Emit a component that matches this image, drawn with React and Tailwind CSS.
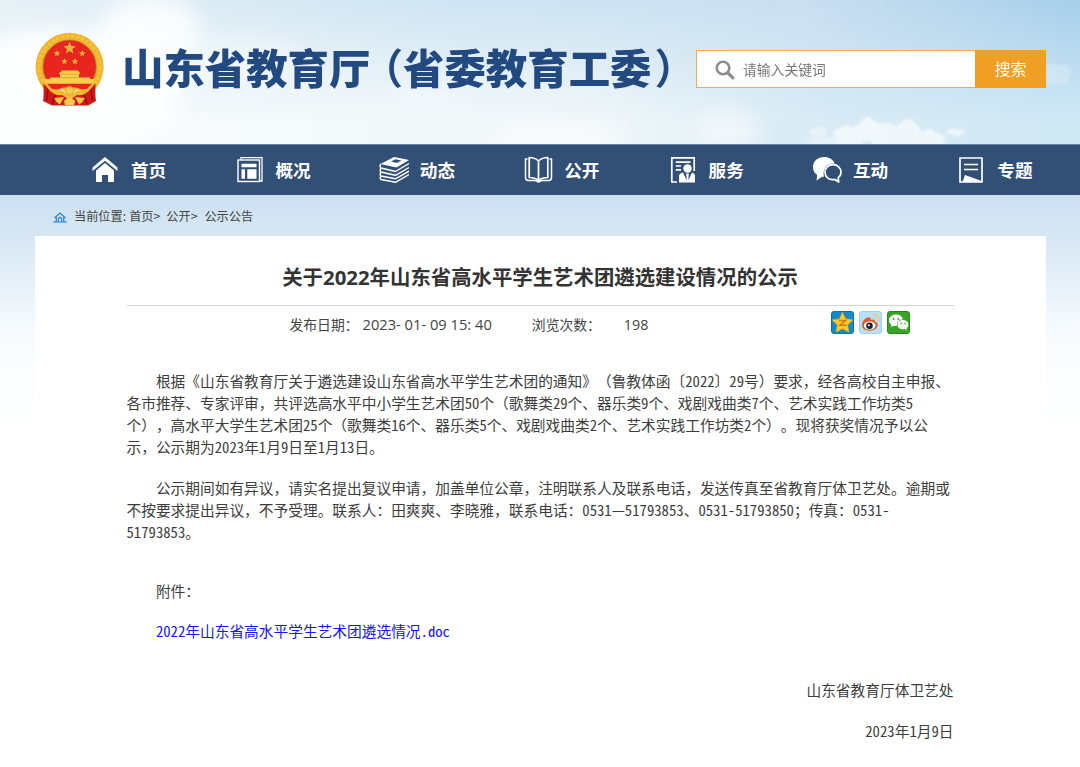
const NAV_ITEMS = [
  { label: '首页', Icon: HomeIcon },
  { label: '概况', Icon: OverviewIcon },
  { label: '动态', Icon: StackIcon },
  { label: '公开', Icon: BookIcon },
  { label: '服务', Icon: ServiceIcon },
  { label: '互动', Icon: ChatIcon },
  { label: '专题', Icon: TopicIcon },
];

const PARAGRAPH_ONE = [
  '根据《山东省教育厅关于遴选建设山东省高水平学生艺术团的通知》（鲁教体函〔2022〕29号）要求，经各高校自主申报、',
  '各市推荐、专家评审，共评选高水平中小学生艺术团50个（歌舞类29个、器乐类9个、戏剧戏曲类7个、艺术实践工作坊类5',
  '个），高水平大学生艺术团25个（歌舞类16个、器乐类5个、戏剧戏曲类2个、艺术实践工作坊类2个）。现将获奖情况予以公',
  '示，公示期为2023年1月9日至1月13日。',
];

const PARAGRAPH_TWO = [
  '公示期间如有异议，请实名提出复议申请，加盖单位公章，注明联系人及联系电话，发送传真至省教育厅体卫艺处。逾期或',
  '不按要求提出异议，不予受理。联系人：田爽爽、李晓雅，联系电话：0531—51793853、0531-51793850；传真：0531-',
  '51793853。',
];

export default function App() {
  return (
    <div className="w-[1080px] h-[767px] overflow-hidden bg-white font-['Noto_Sans_CJK_SC',sans-serif] text-[#333] [text-spacing-trim:space-all]">
      <Header />
      <NavBar />
      <main className="h-[572px] pl-[35px] pr-[34px] bg-[linear-gradient(180deg,#cde0f0_0px,#d8e8f4_45px,#e6f0f9_85px,#f4f9fd_125px,#fbfdfe_175px,#ffffff_240px)]">
        <Breadcrumb />
        <Article />
      </main>
    </div>
  );
}

function Header() {
  return (
    <header className="relative h-36 overflow-hidden bg-[#d9eaf5]">
      <Sky />
      <div className="relative flex items-start pl-[35px]">
        <Emblem />
        <h1 className="ml-[17px] mt-9 flex text-[41.4px] leading-[60px] font-black text-[#234a80] whitespace-nowrap">
          <span>山东省教育厅</span>
          <span className="ml-[12px] font-bold [font-feature-settings:'halt']">（</span>
          <span>省委教育工委</span>
          <span className="ml-[3px] font-bold [font-feature-settings:'halt']">）</span>
        </h1>
        <form className="absolute left-[696px] top-[50px] flex w-[350px] h-[38px] border border-[#f0ae50] bg-white">
          <svg className="ml-[18px] mt-[9px] w-5 h-5" viewBox="0 0 20 20" fill="none" stroke="#8d8d8d">
            <circle cx="8" cy="8" r="6.3" strokeWidth="2.6" />
            <path d="M12.8 12.8 17.8 17.8" strokeWidth="3.2" strokeLinecap="round" />
          </svg>
          <span className="ml-2 flex-1 text-[13.8px] leading-[37px] text-[#777]">请输入关键词</span>
          <button type="button" className="-my-px -mr-px w-[71px] bg-[#f19f25] pb-0.5 text-base text-white">搜索</button>
        </form>
      </div>
    </header>
  );
}

function Sky() {
  return (
    <svg className="absolute inset-0" width="1080" height="144" viewBox="0 0 1080 144" preserveAspectRatio="none">
      <defs>
        <linearGradient id="sky" x1="0" y1="0" x2="1" y2="0">
          <stop offset="0" stopColor="#e6f1f6" />
          <stop offset="0.4" stopColor="#d0e5f3" />
          <stop offset="0.75" stopColor="#c9dff0" />
          <stop offset="1" stopColor="#a8cfeb" />
        </linearGradient>
        <linearGradient id="low" x1="0" y1="0" x2="1" y2="0">
          <stop offset="0" stopColor="#f8fcfc" />
          <stop offset="0.55" stopColor="#f1f7f9" />
          <stop offset="0.75" stopColor="#d9ebf5" />
          <stop offset="1" stopColor="#cfe8f4" />
        </linearGradient>
        <linearGradient id="fade" x1="0" y1="0" x2="0" y2="1">
          <stop offset="0" stopColor="#000" />
          <stop offset="0.85" stopColor="#fff" />
        </linearGradient>
        <mask id="lowMask">
          <rect width="1080" height="144" fill="url(#fade)" />
        </mask>
        <filter id="soft" x="-60%" y="-150%" width="220%" height="400%">
          <feGaussianBlur stdDeviation="11" />
        </filter>
        <filter id="puff" x="-30%" y="-50%" width="160%" height="200%">
          <feTurbulence type="fractalNoise" baseFrequency="0.09" numOctaves="3" seed="4" />
          <feDisplacementMap in="SourceGraphic" scale="9" xChannelSelector="R" yChannelSelector="G" />
          <feGaussianBlur stdDeviation="1.8" />
        </filter>
      </defs>
      <rect width="1080" height="144" fill="url(#sky)" />
      <rect width="1080" height="144" fill="url(#low)" mask="url(#lowMask)" />
      <g fill="#fdfefe" filter="url(#soft)">
        <ellipse cx="60" cy="95" rx="120" ry="65" />
        <ellipse cx="150" cy="30" rx="50" ry="34" opacity="0.9" />
        <ellipse cx="240" cy="60" rx="70" ry="20" opacity="0.4" />
        <ellipse cx="430" cy="102" rx="50" ry="10" opacity="0.4" />
        <ellipse cx="560" cy="138" rx="70" ry="10" opacity="0.7" />
        <ellipse cx="725" cy="132" rx="30" ry="20" opacity="0.6" />
      </g>
      <g fill="#fff" filter="url(#puff)" opacity="0.65">
        <ellipse cx="850" cy="136" rx="18" ry="10" />
        <circle cx="868" cy="130" r="11" />
        <circle cx="886" cy="138" r="15" />
        <circle cx="908" cy="130" r="10" />
        <ellipse cx="920" cy="140" rx="26" ry="9" />
        <ellipse cx="955" cy="132" rx="10" ry="4" />
        <ellipse cx="818" cy="132" rx="9" ry="4" opacity="0.6" />
        <ellipse cx="822" cy="142" rx="18" ry="4" opacity="0.6" />
      </g>
      <ellipse cx="1056" cy="74" rx="16" ry="11" fill="#fff" opacity="0.22" filter="url(#puff)" />
    </svg>
  );
}

function Emblem() {
  const star = 'M0-5 1.3-1.7 4.8-1.5 2 .7 3 4 0 2.1-3 4-2 .7-4.8-1.5-1.3-1.7Z';
  return (
    <svg className="mt-8 shrink-0" width="70" height="75" viewBox="0 0 70 75">
      <circle cx="34.6" cy="34.7" r="34" fill="#f0b530" />
      <circle cx="34.6" cy="34.7" r="30.5" fill="none" stroke="#f4c43f" strokeWidth="3" strokeDasharray="3 2" />
      <circle cx="34.6" cy="34.7" r="26.6" fill="#e9251f" stroke="#b97a1c" strokeWidth="0.8" />
      <g fill="#e9b437">
        <path d={star} transform="translate(34.6 16.3) scale(1.3)" />
        <path d={star} transform="translate(22 21.5) scale(.68)" />
        <path d={star} transform="translate(47.3 21.5) scale(.68)" />
        <path d={star} transform="translate(29.5 29.5) scale(.68)" />
        <path d={star} transform="translate(40 29.5) scale(.68)" />
      </g>
      <path d="M27 38.5H43L45.5 42H44V45.5H55V47H60L57 52H12L9 47H15V45.5H25V42H23.5Z" fill="#f5cf49" />
      <path d="M26 42.3H43.5M25 45.5H45" stroke="#d99b25" strokeWidth=".7" />
      <path d="M12 51.8H57L52 57H17Z" fill="#e9251f" />
      <path d="M8.5 51.5C8.5 60 9 64 8 69L17 73.5H53L61 69C60 63 60.5 58 60.5 51.5L52 60H17Z" fill="#d3181c" />
      <path d="M13 57 11.5 69M20 63 17 72M56 57 57.5 69M49 63 52 72" stroke="#96090e" strokeWidth="1.5" />
      <path d="M10 51 16 57C22 60 25 55 29.5 55.5H39.5C44 55 47 60 53 57L59 51C55 60 49 64 42 63L34.6 68 27 63C20 64 14 60 10 51Z" fill="#f0b935" />
      <path d="M25 58.5C28 57.5 29 59 31 61.5M44 58.5C41 57.5 40 59 38 61.5" fill="none" stroke="#fbe9a0" strokeWidth="1.2" />
      <path d="M19 66 29 65 25 72.5 22 70.5ZM50 66 40 65 44 72.5 47 70.5Z" fill="#f2c544" />
      <path d="M29 69Q34.6 62 40.2 69L39 73H30Z" fill="#f5cd4b" />
      <circle cx="34.6" cy="58.5" r="4" fill="#f5cd4b" stroke="#dfa027" strokeWidth=".8" />
    </svg>
  );
}

function NavBar() {
  return (
    <nav className="flex h-[51px] pl-[90px] bg-[#325075] border-t border-[#6783a6]">
      {NAV_ITEMS.map(({ label, Icon }) => (
        <a key={label} className="flex w-[144.4px] shrink-0 items-center text-white">
          <Icon />
          <span className="ml-[11px] text-[17.6px] font-bold leading-none whitespace-nowrap">{label}</span>
        </a>
      ))}
    </nav>
  );
}

function Breadcrumb() {
  return (
    <div className="flex h-[41px] items-center pt-px pl-[18px] text-[12.2px] text-[#444]">
      <svg className="mt-0.5 mr-[7px]" width="14" height="12" viewBox="0 0 14 12" fill="none" stroke="#2482d8">
        <path d="M1.5 7 7 2 12.5 7M3.2 6V10.5M10.8 6V10.5M0 11H14M5.3 10.5V7.6L7 6.2 8.7 7.6V10.5" strokeWidth="1.2" />
      </svg>
      <span>当前位置:</span>
      <span className="ml-[3px]">首页&gt;</span>
      <span className="ml-1.5">公开&gt;</span>
      <span className="ml-[7px]">公示公告</span>
    </div>
  );
}

function Article() {
  return (
    <article className="h-[531px] bg-white pl-[91.5px] pr-[92.5px]">
      <h2 className="h-[70px] pt-[13px] border-b border-[#d4d4d4] text-center text-[20.4px] leading-[57px] font-bold font-['Open_Sans','Noto_Sans_CJK_SC',sans-serif] whitespace-nowrap">
        关于2022年山东省高水平学生艺术团遴选建设情况的公示
      </h2>

      <div className="flex h-[38px] items-center pl-[163px] text-[13.8px] text-[#444] font-['Open_Sans','Noto_Sans_CJK_SC',sans-serif]">
        <span>发布日期：</span>
        <span className="ml-1 -mt-px text-[14.7px]">2023- 01- 09 15: 40</span>
        <span className="ml-10">浏览次数：</span>
        <span className="ml-[23px] text-[14.3px]">198</span>
        <div className="ml-auto mr-11 -mt-1.5 flex gap-[5px]">
          <QzoneIcon />
          <WeiboIcon />
          <WechatIcon />
        </div>
      </div>

      <div className="pt-[26px] text-[14.71px] leading-[22px] text-[#3d3d3d] whitespace-nowrap">
        <Paragraph lines={PARAGRAPH_ONE} />
        <Paragraph lines={PARAGRAPH_TWO} />
        <p className="pt-[18.5px] pl-[29.4px] mb-[18.6px]">附件：</p>
        <p className="pl-[29.4px]">
          <a className="text-[#1414f0]"><HalfWidth text="2022年山东省高水平学生艺术团遴选情况.doc" /></a>
        </p>
        <p className="mt-[37px] text-right">山东省教育厅体卫艺处</p>
        <p className="mt-[18.6px] text-right"><HalfWidth text="2023年1月9日" /></p>
      </div>
    </article>
  );
}

function Paragraph({ lines }) {
  return (
    <p className="mb-[18.6px]">
      {lines.map((line, i) => (
        <span key={line} className={i === 0 ? 'block pl-[29.4px]' : 'block'}>
          <HalfWidth text={line} />
        </span>
      ))}
    </p>
  );
}

// Latin runs take half an em each, so that they line up with the Chinese characters
function HalfWidth({ text }) {
  return text.split(/([\x21-\x7e]+)/).map((part, i) => (
    i % 2 ? <span key={i} className="[font-feature-settings:'hwid']">{part}</span> : part
  ));
}

function HomeIcon() {
  return (
    <svg width="30" height="28" viewBox="0 0 30 28" fill="currentColor">
      <path d="M15 1 2.5 11.5V15L15 4.7 27.5 15V11.5Z" />
      <path d="M15 7 6 14.6V26H12V19H18V26H24V14.6Z" />
    </svg>
  );
}

function OverviewIcon() {
  return (
    <svg width="30" height="28" viewBox="-1 0 30 28" fill="none" stroke="currentColor">
      <path d="M6 3.5V1.6H27V25H24.5" strokeWidth="1.3" />
      <rect x="3" y="4" width="21.5" height="21.5" strokeWidth="1.4" />
      <path d="M6.5 7.7H21.5V11.2H6.5ZM6.5 13.3H10V22.8H6.5ZM12.3 13.3H21.5V22.8H12.3Z" fill="currentColor" stroke="none" />
    </svg>
  );
}

function StackIcon() {
  return (
    <svg width="30" height="28" viewBox="-0.5 0 30 28" fill="none" stroke="currentColor" strokeWidth="1.4" strokeLinejoin="round">
      <path fillRule="evenodd" fill="currentColor" stroke="none" d="M14.5 1 29.5 4 17 11.5 1 8ZM16 3.2 11.5 5.6 17.5 7 22 4.6Z" />
      <path d="M1.5 8C0 9.5.5 11 1.5 12L16 15.5 29.5 7.5M1.5 12C.5 13.5.5 15 1.5 16L16 19.3 29.5 11.5M1.5 16C.5 17.5.5 19 1.5 20L16 22.8 29.5 15.2M1.5 20C.5 21.5.5 22.7 1.5 23.5L16 26.3 29.5 18.5" />
    </svg>
  );
}

function BookIcon() {
  return (
    <svg width="30" height="28" viewBox="-0.5 0 30 28" fill="none" stroke="currentColor" strokeWidth="1.7" strokeLinejoin="round">
      <path d="M15 5C12 2 9 1.5 5.7 1.5V21.5C9 21.5 12 22 15 24.5 18 22 21 21.5 24.3 21.5V1.5C21 1.5 18 2 15 5ZM15 5V24" />
      <path d="M4 3H2V21.5Q2 24.5 5 24.5H12L15 26 18 24.5H25Q28 24.5 28 21.5V3H26" strokeWidth="1.5" />
    </svg>
  );
}

function ServiceIcon() {
  return (
    <svg width="30" height="28" viewBox="0 0 30 28" fill="none" stroke="currentColor" strokeWidth="1.7">
      <path d="M9 26H3.8V1.8H26.2V15M7.8 6.2H22.5M7.8 10H13M7.8 13.8H13" />
      <g fill="currentColor" stroke="none">
        <circle cx="19.5" cy="12.5" r="4.2" />
        <path d="M11 26.5V20Q11 17.5 15 16.5L18.7 24.5 18.2 17.5H20.8L20.3 24.5 24 16.5Q27 17.5 27 20V26.5Z" />
      </g>
    </svg>
  );
}

function ChatIcon() {
  return (
    <svg width="30" height="28" viewBox="0 0 30 28" fill="none">
      <path fill="currentColor" d="M12.2 1C5.7 1 1 5.3 1 11 1 14.5 2.5 17.2 5.2 19L4.5 24.5 10.2 20.8 12 20.8C10.2 12.5 15.5 6.8 22.8 7.5 21 3.2 17 1 12.2 1Z" />
      <path stroke="currentColor" strokeWidth="1.7" strokeLinejoin="round" d="M21 8.7C16.5 8.7 13 12 13 16.2 13 20.5 16.5 23.7 21 23.7L23 23.5 26.7 26 26.2 21.7C28 20.3 29 18.5 29 16.2 29 12 25.5 8.7 21 8.7Z" />
    </svg>
  );
}

function TopicIcon() {
  return (
    <svg width="30" height="28" viewBox="0 0 30 28" fill="none" stroke="currentColor" strokeWidth="1.7" strokeLinejoin="round">
      <path d="M4 2H26V26H4ZM8 8.5H22M8 13.5H22" />
      <path fill="currentColor" stroke="none" d="M9 19 25.5 25V26H6.5Z" />
    </svg>
  );
}

function QzoneIcon() {
  return (
    <svg width="23" height="23" viewBox="0 0 23 23">
      <rect x=".5" y=".5" width="22" height="22" rx="2.5" fill="#1688cb" stroke="#0f6fac" />
      <path d="M11.5 1 14.6 7.8 22 8.8 16.7 14 18 21.3 11.5 17.8 5 21.3 6.3 14 1 8.8 8.4 7.8Z" fill="#fdcb1e" stroke="#e79c12" strokeWidth=".6" />
      <path d="M8 9.5H14.5L9 14.3H15.5" fill="none" stroke="#dd7414" strokeWidth="1.5" />
    </svg>
  );
}

function WeiboIcon() {
  return (
    <svg width="23" height="23" viewBox="0 0 23 23">
      <rect x=".5" y=".5" width="22" height="22" rx="2.5" fill="#b4e1f3" stroke="#9dd4ea" />
      <path d="M3 14C3 10 7.5 5.5 10.5 6.5 12 7 12 8 11.7 9 14 8 16.5 8.2 16 10.8 21 12.5 19 19.5 11 19.7 6 19.8 3 17.5 3 14Z" fill="#e8532a" />
      <ellipse cx="10.7" cy="14.6" rx="5.9" ry="4" fill="#fff" />
      <circle cx="10.5" cy="14.7" r="3.3" fill="#222" />
      <circle cx="9.8" cy="14.3" r="1" fill="#fff" />
      <path d="M14.5 6.5C17 6 18.3 7.8 17.8 10M14 3.7C18.5 2.8 21.5 6 20.4 10.3" fill="none" stroke="#e8cf83" strokeWidth="1.5" />
    </svg>
  );
}

function WechatIcon() {
  return (
    <svg width="23" height="23" viewBox="0 0 23 23">
      <rect x=".5" y=".5" width="22" height="22" rx="2.5" fill="#36a526" stroke="#248818" />
      <path d="M9 3.5C5 3.5 2 6 2 9.3 2 11.2 3 12.8 4.5 13.8L4 16 6.8 14.7C8 15 9 15 10 14.9 9.5 11 12.5 8.2 16 8.2 15.3 5.3 12.5 3.5 9 3.5Z" fill="#fff" />
      <path d="M15.7 9C12.5 9 10.5 11 10.5 13.7 10.5 16.5 13 18.4 16 18.4L17.8 18.1 20 19.3 19.5 17.2C20.8 16.3 21.5 15.2 21.5 13.7 21.5 11 19 9 15.7 9Z" fill="#f3f7ee" />
      <g fill="#36a526">
        <circle cx="6.7" cy="8" r="1" />
        <circle cx="11.3" cy="8" r="1" />
        <circle cx="14.2" cy="12.5" r=".8" />
        <circle cx="18" cy="12.5" r=".8" />
      </g>
    </svg>
  );
}
